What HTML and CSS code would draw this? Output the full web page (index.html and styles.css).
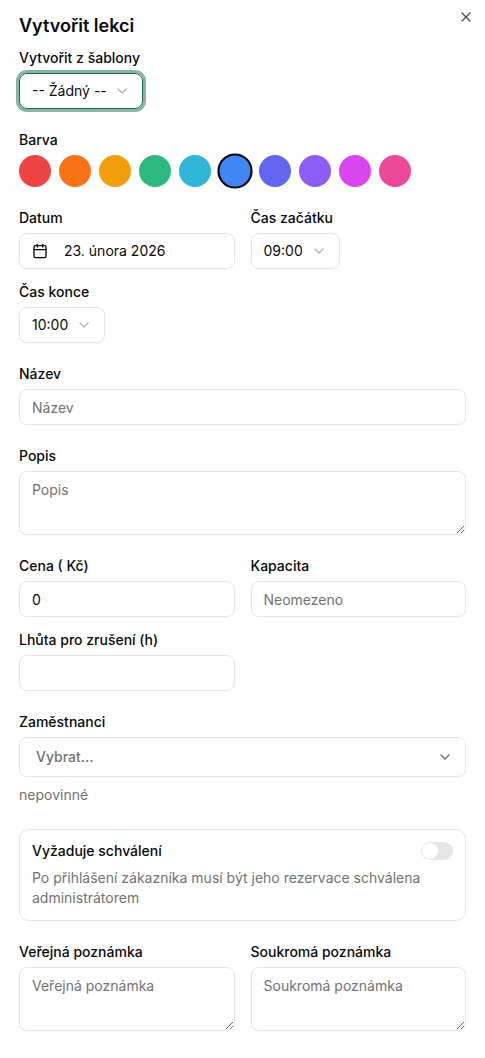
FILE: index.html
```html
<!DOCTYPE html>
<html lang="cs">
<head>
  <meta charset="UTF-8">
  <meta name="viewport" content="width=device-width, initial-scale=1.0">
  <title>Vytvořit lekci</title>
  <link rel="stylesheet" href="styles.css">
</head>
<body>
  <main class="dialog">
    <button class="close-btn" type="button" aria-label="Zavřít">
      <svg class="icon" viewBox="0 0 24 24"><path d="M18 6 6 18"/><path d="m6 6 12 12"/></svg>
    </button>
    <h1 class="dialog-title">Vytvořit lekci</h1>

    <form class="lesson-form">
      <div class="field">
        <label for="template">Vytvořit z šablony</label>
        <div class="select-wrap">
          <select class="control select focused" id="template" name="template">
            <option>-- Žádný --</option>
          </select>
          <svg class="icon chevron" viewBox="0 0 24 24"><path d="m6 9 6 6 6-6"/></svg>
        </div>
      </div>

      <fieldset class="field">
        <legend>Barva</legend>
        <div class="colors">
          <input class="color red" type="radio" name="color" value="red" aria-label="Červená">
          <input class="color orange" type="radio" name="color" value="orange" aria-label="Oranžová">
          <input class="color amber" type="radio" name="color" value="amber" aria-label="Jantarová">
          <input class="color green" type="radio" name="color" value="green" aria-label="Zelená">
          <input class="color cyan" type="radio" name="color" value="cyan" aria-label="Tyrkysová">
          <input class="color blue" type="radio" name="color" value="blue" aria-label="Modrá" checked>
          <input class="color indigo" type="radio" name="color" value="indigo" aria-label="Indigová">
          <input class="color violet" type="radio" name="color" value="violet" aria-label="Fialová">
          <input class="color fuchsia" type="radio" name="color" value="fuchsia" aria-label="Purpurová">
          <input class="color pink" type="radio" name="color" value="pink" aria-label="Růžová">
        </div>
      </fieldset>

      <div class="grid">
        <div class="field">
          <label for="date">Datum</label>
          <button class="control date-btn" id="date" type="button">
            <svg class="icon" viewBox="0 0 24 24"><path d="M8 2v4"/><path d="M16 2v4"/><rect width="18" height="18" x="3" y="4" rx="2"/><path d="M3 10h18"/></svg>
            23. února 2026
          </button>
        </div>
        <div class="field">
          <label for="start">Čas začátku</label>
          <div class="select-wrap">
            <select class="control select" id="start" name="start">
              <option>09:00</option>
            </select>
            <svg class="icon chevron" viewBox="0 0 24 24"><path d="m6 9 6 6 6-6"/></svg>
          </div>
        </div>
        <div class="field">
          <label for="end">Čas konce</label>
          <div class="select-wrap">
            <select class="control select" id="end" name="end">
              <option>10:00</option>
            </select>
            <svg class="icon chevron" viewBox="0 0 24 24"><path d="m6 9 6 6 6-6"/></svg>
          </div>
        </div>
      </div>

      <div class="field">
        <label for="name">Název</label>
        <input class="control" id="name" name="name" type="text" placeholder="Název">
      </div>

      <div class="field">
        <label for="description">Popis</label>
        <textarea class="control textarea" id="description" name="description" placeholder="Popis"></textarea>
      </div>

      <div class="grid">
        <div class="field">
          <label for="price">Cena ( Kč)</label>
          <input class="control" id="price" name="price" type="text" inputmode="numeric" value="0">
        </div>
        <div class="field">
          <label for="capacity">Kapacita</label>
          <input class="control" id="capacity" name="capacity" type="text" inputmode="numeric" placeholder="Neomezeno">
        </div>
        <div class="field">
          <label for="deadline">Lhůta pro zrušení (h)</label>
          <input class="control" id="deadline" name="deadline" type="text" inputmode="numeric">
        </div>
      </div>

      <div class="field">
        <label for="staff">Zaměstnanci</label>
        <div class="select-wrap wide">
          <select class="control select staff" id="staff" name="staff">
            <option>Vybrat...</option>
          </select>
          <svg class="icon chevron" viewBox="0 0 24 24"><path d="m6 9 6 6 6-6"/></svg>
        </div>
        <p class="hint">nepovinné</p>
      </div>

      <div class="approval">
        <div class="approval-head">
          <label class="approval-label" for="approval">Vyžaduje schválení</label>
          <input class="switch" id="approval" name="approval" type="checkbox" role="switch">
        </div>
        <p class="hint">Po přihlášení zákazníka musí být jeho rezervace schválena administrátorem</p>
      </div>

      <div class="grid">
        <div class="field">
          <label for="publicNote">Veřejná poznámka</label>
          <textarea class="control textarea" id="publicNote" name="publicNote" placeholder="Veřejná poznámka"></textarea>
        </div>
        <div class="field">
          <label for="privateNote">Soukromá poznámka</label>
          <textarea class="control textarea" id="privateNote" name="privateNote" placeholder="Soukromá poznámka"></textarea>
        </div>
      </div>
    </form>
  </main>
</body>
</html>
```
FILE: styles.css
```css
* {
  box-sizing: border-box;
}

body {
  margin: 0;
  background: #fefefe;
  color: #0a0a0a;
  font-family: Inter, "Liberation Sans", sans-serif;
  font-size: 14px;
  line-height: 20px;
}

.dialog {
  position: relative;
  display: flex;
  flex-direction: column;
  gap: 16px;
  padding: 17px 19px 24px;
}

.dialog-title {
  margin: 0;
  font-size: 18px;
  line-height: 18px;
  font-weight: 600;
}

.close-btn {
  position: absolute;
  top: 9px;
  right: 11px;
  display: flex;
  padding: 0;
  border: 0;
  background: none;
  color: #0a0a0a;
  opacity: 0.7;
  cursor: pointer;
}

.icon {
  width: 16px;
  height: 16px;
  flex-shrink: 0;
  fill: none;
  stroke: currentColor;
  stroke-width: 2;
  stroke-linecap: round;
  stroke-linejoin: round;
}

.lesson-form {
  display: flex;
  flex-direction: column;
  gap: 24px;
}

.field {
  display: flex;
  flex-direction: column;
  gap: 8px;
  min-width: 0;
  margin: 0;
  padding: 0;
  border: 0;
}

label,
legend {
  padding: 0;
  line-height: 14px;
  font-weight: 500;
}

/* legend is outside the flex gap */
legend {
  margin-bottom: 8px;
}

.grid {
  display: grid;
  grid-template-columns: 1fr 1fr;
  gap: 16px;
}

/* Inputs */
.control {
  display: block;
  width: 100%;
  height: 36px;
  margin: 0;
  padding: 0 12px;
  border: 1px solid #e5e5e5;
  border-radius: 8px;
  background: transparent;
  box-shadow: 0 1px 2px rgba(0, 0, 0, 0.03);
  color: inherit;
  font: inherit;
  outline: none;
}

.control::placeholder {
  color: #737373;
  opacity: 1;
}

.control:focus,
.focused {
  border-color: #24664f;
  box-shadow: 0 0 0 3px #87b4a5;
}

.textarea {
  height: 64px;
  padding: 8px 12px;
  resize: vertical;
}

.date-btn {
  display: flex;
  align-items: center;
  gap: 16px;
  text-align: left;
}

/* Selects */
.select-wrap {
  display: grid;
  align-items: center;
  width: fit-content;
}

.select-wrap > * {
  grid-area: 1 / 1;
}

.select {
  width: auto;
  padding-right: 35px;
  appearance: none;
}

.chevron {
  justify-self: end;
  margin-right: 13px;
  opacity: 0.3;
  pointer-events: none;
}

.wide {
  width: 100%;
}

.staff {
  height: 40px;
  padding-left: 16px;
  color: #737373;
  font-weight: 500;
}

.wide .chevron {
  opacity: 0.6;
}

.hint {
  margin: 0;
  color: #737373;
}

/* Color picker */
.colors {
  display: flex;
  flex-wrap: wrap;
  gap: 8px;
}

.color {
  width: 32px;
  height: 32px;
  margin: 0;
  border-radius: 50%;
  appearance: none;
  cursor: pointer;
}

.color:checked {
  border: 2px solid #0a0a0a;
  transform: scale(1.1);
}

.red { background: #ef4444; }
.orange { background: #f97316; }
.amber { background: #f59e0b; }
.green { background: #2eb880; }
.cyan { background: #2fb5d6; }
.blue { background: #4086f4; }
.indigo { background: #6366f1; }
.violet { background: #8b5cf6; }
.fuchsia { background: #d946ef; }
.pink { background: #ec4899; }

/* Approval card */
.approval {
  display: flex;
  flex-direction: column;
  gap: 8px;
  padding: 12px;
  border: 1px solid #e5e5e5;
  border-radius: 10px;
}

.approval-head {
  display: flex;
  align-items: center;
  justify-content: space-between;
}

.approval-label {
  line-height: 18px;
}

.switch {
  display: flex;
  align-items: center;
  width: 32px;
  height: 18px;
  margin: 0;
  padding: 1px;
  border-radius: 9px;
  background: #e5e5e5;
  appearance: none;
  cursor: pointer;
}

.switch::before {
  content: "";
  width: 16px;
  height: 16px;
  border-radius: 50%;
  background: #fff;
}

.switch:checked {
  justify-content: flex-end;
  background: #24664f;
}
```
